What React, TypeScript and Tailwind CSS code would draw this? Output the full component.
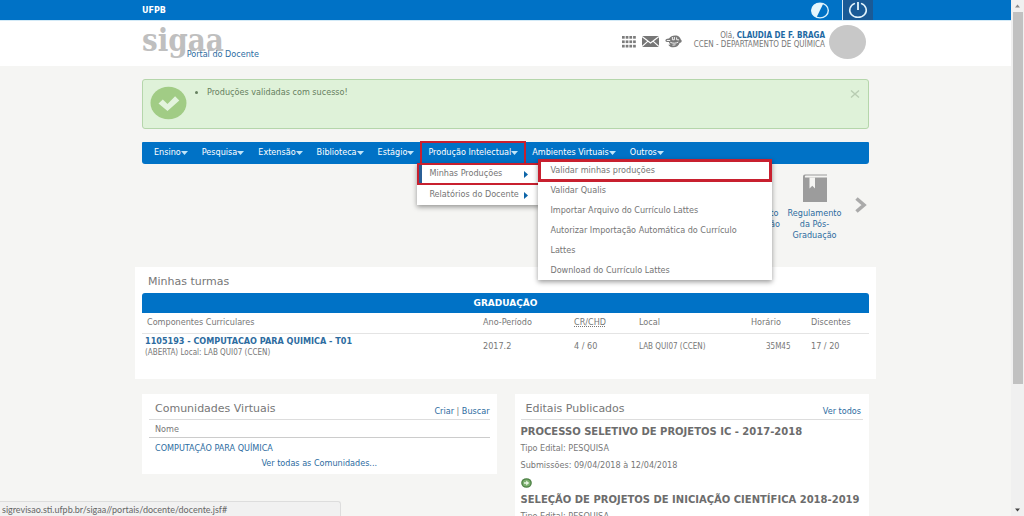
import { clsx } from "clsx";

interface MenuEntry {
  label: string;
  open?: boolean;
}

const menu: MenuEntry[] = [
  { label: "Ensino" },
  { label: "Pesquisa" },
  { label: "Extensão" },
  { label: "Biblioteca" },
  { label: "Estágio" },
  { label: "Produção Intelectual", open: true },
  { label: "Ambientes Virtuais" },
  { label: "Outros" },
];

const producoes = [
  "Validar minhas produções",
  "Validar Qualis",
  "Importar Arquivo do Currículo Lattes",
  "Autorizar Importação Automática do Currículo Lattes",
  "Download do Currículo Lattes",
];

const editais = [
  {
    title: "PROCESSO SELETIVO DE PROJETOS IC - 2017-2018",
    type: "PESQUISA",
    dates: "09/04/2018 à 12/04/2018",
  },
  {
    title: "SELEÇÃO DE PROJETOS DE INICIAÇÃO CIENTÍFICA 2018-2019",
    type: "PESQUISA",
    dates: "09/04/2018 à 12/04/2018",
  },
];

function TopBar() {
  return (
    <div className="h-5 bg-[#0072c6]">
      <div className="mx-auto flex h-5 max-w-[727px] items-center justify-between">
        <span className="pt-px font-['DejaVu_Sans'] text-[8px] font-bold text-white">UFPB</span>
        <div className="flex h-5 items-center gap-2">
          <button type="button" aria-label="Alto contraste">
            <svg className="h-[17px] w-5" viewBox="0 0 20 17">
              <ellipse cx="10" cy="8.5" rx="8.3" ry="7.4" fill="none" stroke="#d9f1fb" strokeWidth="1.4" />
              <path d="M13.2 1.7A8.3 7.4 0 1 0 6.6 15.3Z" fill="#e6f6fd" />
            </svg>
          </button>
          <button
            type="button"
            aria-label="Sair"
            className="ml-1 flex h-5 w-[31px] items-center justify-center border-l border-[#d5e9f6] bg-[#1a5a96] -mr-1"
          >
            <svg className="h-[18px] w-5" viewBox="0 0 20 18" fill="none" stroke="#e4f4fc" strokeWidth="1.5">
              <path d="M7 2.4A8.3 7.2 0 1 0 13 2.4" />
              <path d="M10 1v8" strokeWidth="1.8" />
            </svg>
          </button>
        </div>
      </div>
    </div>
  );
}

function Header() {
  return (
    <header className="h-[46px] border-t border-[#d3eaf7] bg-white">
      <div className="mx-auto flex max-w-[727px] justify-between">
        <a href="#" className="relative block h-[45px] w-[117px]">
          <span className="block font-['DejaVu_Serif_Condensed','DejaVu_Serif',serif] text-[31px] leading-[38px] font-bold text-[#bfbfbf]">
            sigaa
          </span>
          <span className="absolute right-0 bottom-[6px] text-[9px] leading-3 whitespace-nowrap text-[#2d6c9f]">
            Portal do Docente
          </span>
        </a>
        <div className="flex h-[45px] items-center">
          <div className="flex items-center gap-[6px] pb-1">
            <button type="button" aria-label="Módulos">
              <svg className="h-3 w-[14px]" viewBox="0 0 14 12" fill="#7c7c7c">
                {[0, 4.4, 8.8].map((y) =>
                  [0, 3.7, 7.4, 11.1].map((x) => (
                    <rect key={`${x}-${y}`} x={x} y={y} width="2.7" height="2.7" />
                  ))
                )}
              </svg>
            </button>
            <button type="button" aria-label="Caixa postal">
              <svg className="h-[11px] w-[17px]" viewBox="0 0 17 11">
                <rect width="17" height="11" fill="#777" />
                <path d="M0 .5 8.5 7 17 .5M0 10.5 6 5.2M17 10.5 11 5.2" fill="none" stroke="#fff" strokeWidth="1.1" />
              </svg>
            </button>
            <button type="button" aria-label="Abrir chamado">
              <svg className="h-[13px] w-[17px]" viewBox="0 0 17 13">
                <path d="M4 3.600C5.500 1 8.500 0 11.500.500c2.200.400 4 2 4.300 4.100.7.300 1 .9.9 1.600-.2 1.200-1.100 1.600-2.100 1.700-.8 2.600-3.200 4.400-6.100 4.400-2.500 0-4.300-1-5.200-2.600l2.300-.3C4.500 8.800 4 7.900 4 7 2 7.200.400 6.700.400 5.500.400 4.300 2 3.500 4 3.600z" fill="#7a7a7a" />
                <path d="M1.800 5.500h3.400M7.400 2v2.800h2V2M11.600 2.400v2.300l2.400.2M5.300 7.300c2.400 1.300 5.600 1.200 8-.2M7.500 10.200l3-.4" fill="none" stroke="#fff" strokeWidth=".9" />
              </svg>
            </button>
          </div>
          <div className="mr-1 ml-3 pb-2 text-right text-[8px] leading-[9px] text-[#777]">
            <p>
              Olá,{" "}
              <a href="#" className="font-['DejaVu_Sans_Condensed','DejaVu_Sans'] font-bold text-[#1d69a3]">
                CLAUDIA DE F. BRAGA
              </a>
            </p>
            <p>CCEN - DEPARTAMENTO DE QUÍMICA</p>
          </div>
          <div className="mr-[3px] mb-1 h-[34px] w-[37px] rounded-[50%] bg-[#c8c8c8]" />
        </div>
      </div>
    </header>
  );
}

function SuccessAlert() {
  return (
    <div
      role="status"
      className="mx-auto mt-[13px] flex h-[50px] max-w-[727px] rounded-[3px] border border-[#b5d6ab] bg-[#dff2d9] pt-[6px] pl-[7px]"
    >
      <svg className="h-[34px] w-[37px] shrink-0" viewBox="0 0 37 34">
        <ellipse cx="18.500" cy="17" rx="18" ry="16.300" fill="#a1cc85" />
        <path d="M8.500 17.500l4.300-4 4.700 4.400 7.600-7.600 4.200 4.100L17.500 25z" fill="#e3f4dd" />
      </svg>
      <ul className="ml-5 flex-1 list-disc text-[9px] leading-3 text-[#668060]">
        <li>Produções validadas com sucesso!</li>
      </ul>
      <button type="button" aria-label="Fechar" className="mt-1 mr-2 h-2 w-[10px]">
        <svg viewBox="0 0 10 8" fill="none" stroke="#b9cdb3" strokeWidth="1.400">
          <path d="M1 .5 9 7.500M9 .5 1 7.500" />
        </svg>
      </button>
    </div>
  );
}

function Caret() {
  return (
    <svg className="h-1 w-[7px]" viewBox="0 0 7 4" fill="#bfe4f8">
      <path d="M0 0h7L3.500 4z" />
    </svg>
  );
}

function SideArrow() {
  return (
    <svg className="h-[7px] w-1" viewBox="0 0 4 7" fill="#0d65a8">
      <path d="M0 0v7l4-3.500z" />
    </svg>
  );
}

function ProducaoMenu() {
  return (
    <div className="absolute top-[21px] -left-1 z-10 w-[123px] bg-white text-[#757575] shadow-[0_2px_5px_rgba(0,0,0,0.4)]">
      <a
        href="#"
        className="flex h-[22px] items-center justify-between border-2 border-[#c8202f] pr-[10px] pl-[3px] shadow-[inset_3px_0_0_#2b5f96]"
      >
        <span className="pl-[7px]">Minhas Produções</span>
        <SideArrow />
      </a>
      <a href="#" className="flex h-5 items-center justify-between pr-3 pl-3 whitespace-nowrap">
        Relatórios do Docente
        <SideArrow />
      </a>
      <ul className="absolute -top-1 left-[121px] w-[234px] bg-white leading-5 shadow-[0_2px_5px_rgba(0,0,0,0.4)]">
        {producoes.map((item, i) => (
          <li key={item}>
            <a
              href="#"
              className={clsx(
                "block",
                i === 0
                  ? "relative -mb-[2px] h-[23px] border-[3px] border-[#c8202f] pl-[9px] leading-4"
                  : "border-b border-[#f3f3f3] pr-6 pl-3 last:border-0",
                i !== 0 && i !== 3 && "h-5",
                i === 3 && "h-10"
              )}
            >
              {item}
            </a>
          </li>
        ))}
      </ul>
    </div>
  );
}

function MainMenu() {
  return (
    <nav className="mx-auto mt-[13px] flex h-[22px] max-w-[727px] rounded-t-[1px] rounded-b-[3px] bg-[#0072c6] pl-[5px] text-[9px]">
      {menu.map((entry) => (
        <div key={entry.label} className="relative">
          <button
            type="button"
            className={clsx(
              "flex h-[22px] items-center px-[7px] whitespace-nowrap text-white",
              entry.open && "outline-2 -outline-offset-1 outline-[#c8202f]"
            )}
          >
            {entry.label}
            <Caret />
          </button>
          {entry.open && <ProducaoMenu />}
        </div>
      ))}
    </nav>
  );
}

function Shortcut({ lines }: { lines: string[] }) {
  return (
    <a href="#" className="flex w-[63px] flex-col items-center text-center text-[9px] leading-[11px] text-[#2d6c9f]">
      <svg className="mb-[6px] h-7 w-6" viewBox="0 0 24 28">
        <path d="M0 2.500Q0 .5 2 .5h22v1H2.500q-1 .5-.5 2H24V28H0z" fill="#9c9c9c" />
        <path d="M6.500 3.500h5.500v11l-2.700-2.800L6.500 14.500z" fill="#f5f5f3" />
      </svg>
      {lines.map((line) => (
        <span key={line} className="whitespace-nowrap">
          {line}
        </span>
      ))}
    </a>
  );
}

function Shortcuts() {
  return (
    <div className="mx-auto flex h-[103px] max-w-[727px] justify-end pt-[10px]">
      <Shortcut lines={["Regulamento", "da Graduação"]} />
      <Shortcut lines={["Regulamento", "da Pós-", "Graduação"]} />
      <button type="button" aria-label="Próximo" className="mt-[23px] mr-[2px] ml-[9px] h-4 w-3">
        <svg viewBox="0 0 12 16" fill="none" stroke="#aaa" strokeWidth="3.600">
          <path d="M1.500 1.500 9 8l-7.500 6.500" />
        </svg>
      </button>
    </div>
  );
}

function Turmas() {
  return (
    <section className="mx-auto h-[112px] max-w-[741px] bg-white px-[7px] pt-2">
      <h2 className="pl-[6px] font-['DejaVu_Sans'] text-[11px] leading-[14px] text-[#777]">Minhas turmas</h2>
      <table className="mt-1 w-full table-fixed text-left text-[9px] text-[#777]">
        <caption className="h-5 rounded-t-[3px] bg-[#0072c6] font-['DejaVu_Sans'] text-[9px] leading-[21px] font-bold text-white">
          GRADUAÇÃO
        </caption>
        <thead>
          <tr className="h-5 border-b border-[#e4e4e4] [&>th]:font-normal">
            <th className="pl-[5px]">Componentes Curriculares</th>
            <th className="w-[91px]">Ano-Período</th>
            <th className="w-[65px]">
              <abbr title="Créditos / Carga Horária" className="decoration-dotted">
                CR/CHD
              </abbr>
            </th>
            <th className="w-[112px]">Local</th>
            <th className="w-[60px]">Horário</th>
            <th className="w-[58px]">Discentes</th>
          </tr>
        </thead>
        <tbody>
          <tr className="h-[27px]">
            <td className="pl-[3px] leading-[11px]">
              <a href="#" className="block font-bold text-[#2d6c9f]">
                1105193 - COMPUTACAO PARA QUIMICA - T01
              </a>
              <span className="block text-[8px]">(ABERTA) Local: LAB QUI07 (CCEN)</span>
            </td>
            <td>2017.2</td>
            <td>4 / 60</td>
            <td className="text-[8px]">LAB QUI07 (CCEN)</td>
            <td className="pl-[15px] text-[8px]">35M45</td>
            <td>17 / 20</td>
          </tr>
        </tbody>
      </table>
    </section>
  );
}

function Comunidades() {
  return (
    <section className="h-20 bg-white px-[7px] pt-[6px] text-[9px]">
      <div className="flex h-5 items-center justify-between border-b border-[#ddd] pl-[6px]">
        <h2 className="font-['DejaVu_Sans'] text-[11px] text-[#777]">Comunidades Virtuais</h2>
        <p className="pt-1 text-[#777]">
          <a href="#" className="text-[#2d6c9f]">Criar</a>
          {" | "}
          <a href="#" className="text-[#2d6c9f]">Buscar</a>
        </p>
      </div>
      <p className="h-[18px] border-b border-[#ccc] pl-[6px] leading-[18px] text-[#777]">Nome</p>
      <a href="#" className="mt-[3px] block pl-[6px] leading-[14px] text-[#2d6c9f]">
        COMPUTAÇÃO PARA QUÍMICA
      </a>
      <a href="#" className="block text-center leading-4 text-[#2d6c9f]">
        Ver todas as Comunidades...
      </a>
    </section>
  );
}

function Editais() {
  return (
    <section className="bg-white px-[6px] pt-[6px] text-[9px] text-[#777]">
      <div className="mb-[5px] flex h-5 items-center justify-between border-b border-[#ddd] pr-[2px] pl-[5px]">
        <h2 className="font-['DejaVu_Sans'] text-[11px]">Editais Publicados</h2>
        <a href="#" className="pt-1 text-[#2d6c9f]">Ver todos</a>
      </div>
      {editais.map((edital) => (
        <article key={edital.title} className="h-[68px]">
          <h3 className="font-['DejaVu_Sans'] text-[10px] leading-[14px] font-bold whitespace-nowrap text-[#6c6c6c]">
            {edital.title}
          </h3>
          <p className="leading-[18px]">Tipo Edital: {edital.type}</p>
          <p className="leading-[17px]">Submissões: {edital.dates}</p>
          <button type="button" aria-label="Ver edital" className="mt-1 block h-[10px] w-[11px]">
            <svg viewBox="0 0 11 10">
              <ellipse cx="5.500" cy="5" rx="5.300" ry="4.800" fill="#4b7f43" />
              <ellipse cx="5.500" cy="5" rx="4" ry="3.600" fill="#7db070" />
              <path d="M3 4.200h2.200V2.500L8.200 5l-3 2.500V5.800H3z" fill="#e9f6e4" />
            </svg>
          </button>
        </article>
      ))}
    </section>
  );
}

function ScrollBar() {
  return (
    <div className="flex w-[13px] shrink-0 flex-col items-center bg-[#f0f0f0]">
      <svg className="my-1 h-1 w-[5px] shrink-0" viewBox="0 0 5 4" fill="#888">
        <path d="M0 3.500h5L2.500.5z" />
      </svg>
      <div className="h-[72%] w-[10px] bg-[#c1c1c1]" />
      <svg className="mt-auto mb-1 h-1 w-[5px] shrink-0" viewBox="0 0 5 4" fill="#444">
        <path d="M0 .5h5L2.500 3.500z" />
      </svg>
    </div>
  );
}

export default function App() {
  return (
    <div className="relative flex h-screen overflow-hidden bg-[#f5f5f3] font-['DejaVu_Sans_Condensed','DejaVu_Sans',sans-serif]">
      <div className="min-w-0 flex-1">
        <TopBar />
        <Header />
        <SuccessAlert />
        <MainMenu />
        <Shortcuts />
        <Turmas />
        <div className="mx-auto mt-[15px] grid max-w-[727px] grid-cols-2 items-start gap-[18px]">
          <Comunidades />
          <Editais />
        </div>
      </div>
      <ScrollBar />
      <div className="absolute bottom-0 left-0 h-[15px] w-[341px] rounded-tr-[3px] border-t border-r border-[#ddd] bg-[#f1f1f1] pl-[2px] font-['Lato',sans-serif] text-[9px] leading-[15px] text-[#666]">
        sigrevisao.sti.ufpb.br/sigaa//portais/docente/docente.jsf#
      </div>
    </div>
  );
}
